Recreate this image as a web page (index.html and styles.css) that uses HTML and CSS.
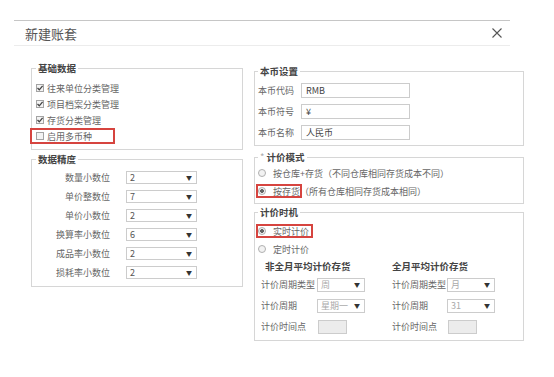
FILE: index.html
```html
<!DOCTYPE html>
<html>
<head>
<meta charset="utf-8">
<title>新建账套</title>
<link rel="stylesheet" href="styles.css">
</head>
<body>
<div class="dialog">
  <div class="dlg-head">
    <span class="dlg-title">新建账套</span>
    <svg class="dlg-close" width="10" height="10" viewBox="0 0 10 10"><path d="M0.5 0.5 L9.5 9.5 M9.5 0.5 L0.5 9.5" stroke="#555" stroke-width="1.1" fill="none"/></svg>
  </div>
  <div class="dlg-body">
    <div class="col-left">
      <fieldset class="grp grp-base">
        <legend>基础数据</legend>
        <div class="chk-row"><span class="chk on"><svg width="8" height="8" viewBox="0 0 8 8"><path d="M1.5 4 L3.3 5.8 L6.6 1.8" stroke="#444" stroke-width="1.3" fill="none"/></svg></span>往来单位分类管理</div>
        <div class="chk-row"><span class="chk on"><svg width="8" height="8" viewBox="0 0 8 8"><path d="M1.5 4 L3.3 5.8 L6.6 1.8" stroke="#444" stroke-width="1.3" fill="none"/></svg></span>项目档案分类管理</div>
        <div class="chk-row"><span class="chk on"><svg width="8" height="8" viewBox="0 0 8 8"><path d="M1.5 4 L3.3 5.8 L6.6 1.8" stroke="#444" stroke-width="1.3" fill="none"/></svg></span>存货分类管理</div>
        <div class="chk-row"><span class="hl hl-multi"><span class="chk"></span>启用多币种</span></div>
      </fieldset>
      <fieldset class="grp grp-prec">
        <legend>数据精度</legend>
        <div class="prec-row"><span class="prec-label">数量小数位</span><span class="sel"><span>2</span><span class="arr">▼</span></span></div>
        <div class="prec-row"><span class="prec-label">单价整数位</span><span class="sel"><span>7</span><span class="arr">▼</span></span></div>
        <div class="prec-row"><span class="prec-label">单价小数位</span><span class="sel"><span>2</span><span class="arr">▼</span></span></div>
        <div class="prec-row"><span class="prec-label">换算率小数位</span><span class="sel"><span>6</span><span class="arr">▼</span></span></div>
        <div class="prec-row"><span class="prec-label">成品率小数位</span><span class="sel"><span>2</span><span class="arr">▼</span></span></div>
        <div class="prec-row"><span class="prec-label">损耗率小数位</span><span class="sel"><span>2</span><span class="arr">▼</span></span></div>
      </fieldset>
    </div>
    <div class="col-right">
      <fieldset class="grp grp-cur">
        <legend>本币设置</legend>
        <div class="cur-row"><span class="cur-label">本币代码</span><span class="txt">RMB</span></div>
        <div class="cur-row"><span class="cur-label">本币符号</span><span class="txt">¥</span></div>
        <div class="cur-row"><span class="cur-label">本币名称</span><span class="txt">人民币</span></div>
      </fieldset>
      <fieldset class="grp grp-mode">
        <legend><span class="star">*</span> 计价模式</legend>
        <div class="rad-row"><span class="rad"></span>按仓库+存货（不同仓库相同存货成本不同）</div>
        <div class="rad-row"><span class="hl hl-stock"><span class="rad on"></span>按存货</span>（所有仓库相同存货成本相同）</div>
      </fieldset>
      <fieldset class="grp grp-time">
        <legend>计价时机</legend>
        <div class="rad-row"><span class="hl hl-real"><span class="rad on"></span>实时计价</span></div>
        <div class="rad-row"><span class="rad"></span>定时计价</div>
        <div class="timing">
          <div class="tcol tcol-a">
            <div class="thead">非全月平均计价存货</div>
            <div class="trow"><span class="tlabel">计价周期类型</span><span class="sel sel-sm"><span>周</span><span class="arr">▼</span></span></div>
            <div class="trow"><span class="tlabel">计价周期</span><span class="sel sel-sm"><span>星期一</span><span class="arr">▼</span></span></div>
            <div class="trow"><span class="tlabel">计价时间点</span><span class="tbox"></span></div>
          </div>
          <div class="tcol tcol-b">
            <div class="thead">全月平均计价存货</div>
            <div class="trow"><span class="tlabel">计价周期类型</span><span class="sel sel-sm"><span>月</span><span class="arr">▼</span></span></div>
            <div class="trow"><span class="tlabel">计价周期</span><span class="sel sel-sm"><span>31</span><span class="arr">▼</span></span></div>
            <div class="trow"><span class="tlabel">计价时间点</span><span class="tbox"></span></div>
          </div>
        </div>
      </fieldset>
    </div>
  </div>
</div>
</body>
</html>
```

FILE: styles.css
```css
body {
    margin: 0;
    background: #ffffff;
    font-family: "Noto Sans CJK SC", "Liberation Sans", sans-serif;
    font-size: 9px;
    color: #666666;
}
.dialog {
    margin: 20px 0 0 14px;
    width: 496px;
    border-top: 1px solid #c6c6c6;
}
.dlg-head {
    height: 24px;
    border-bottom: 1px solid #ececec;
    display: flex;
    align-items: center;
    justify-content: space-between;
    padding: 0 8px 0 11px;
}
.dlg-title {
    font-size: 13px;
    color: #555555;
}
.dlg-body {
    display: flex;
    gap: 11px;
    padding: 16px 0 0 17px;
}
.col-left {
    width: 212px;
    flex: none;
}
.col-right {
    width: 270px;
    flex: none;
    margin-top: 3px;
}

/* group boxes */
.grp {
    margin: 0;
    box-sizing: border-box;
    width: 100%;
    min-width: 0;
    border: 1px solid #d6d6d6;
    padding: 0 4px;
}
.grp legend {
    padding: 0 2px;
    font-size: 9.5px;
    line-height: 12px;
    font-weight: bold;
    color: #444444;
}
.grp-base {
    padding-top: 6px;
    padding-bottom: 5px;
}
.grp-prec {
    margin-top: 3px;
    padding-top: 3px;
    padding-bottom: 4px;
}
.grp-cur {
    padding: 3px 3px 2px;
}
.grp-mode {
    margin-top: 5px;
    padding: 1px 3px 3px;
}
.grp-time {
    margin-top: 2px;
    padding: 4px 3px 3px;
}
.star {
    color: #aaaaaa;
    font-weight: normal;
}

/* check boxes and radios */
.chk-row {
    height: 16px;
    display: flex;
    align-items: center;
}
.chk {
    width: 8px;
    height: 8px;
    box-sizing: border-box;
    border: 1px solid #a4a4a4;
    background: #f3f3f3;
    margin-right: 3px;
    display: flex;
    align-items: center;
    justify-content: center;
}
.chk svg {
    flex: none;
}
.rad-row {
    height: 18px;
    display: flex;
    align-items: center;
}
.rad {
    width: 8px;
    height: 8px;
    box-sizing: border-box;
    border: 1px solid #b0b0b0;
    border-radius: 50%;
    background: #f2f2f2;
    margin-right: 7px;
    flex: none;
}
.rad.on {
    background: radial-gradient(circle, #666666 0 1.6px, #f2f2f2 2.2px);
}
.hl {
    display: inline-flex;
    align-items: center;
    box-sizing: border-box;
    outline: 2px solid #d6443f;
}
.hl-multi {
    width: 81px;
    height: 12px;
    margin-left: -4px;
    padding-left: 4px;
}
.hl-stock {
    height: 10px;
}
.hl-real {
    height: 10px;
    padding-right: 2px;
}

/* precision */
.prec-row {
    height: 19px;
    display: flex;
    align-items: center;
}
.prec-label {
    width: 74px;
    margin-right: 16px;
    text-align: right;
}
.sel {
    width: 71px;
    height: 13px;
    box-sizing: border-box;
    border: 1px solid #cccccc;
    background: #ffffff;
    display: flex;
    align-items: center;
    justify-content: space-between;
    padding: 0 4px 0 3px;
    color: #555555;
}
.sel .arr {
    font-size: 6px;
    color: #333333;
}

/* currency */
.cur-row {
    height: 21px;
    display: flex;
    align-items: center;
}
.cur-label {
    width: 43px;
}
.txt {
    width: 109px;
    height: 15px;
    box-sizing: border-box;
    border: 1px solid #cccccc;
    padding-left: 4px;
    line-height: 13px;
    color: #444444;
}

/* timing */
.timing {
    display: grid;
    grid-template-columns: 131px 131px;
    padding-left: 3px;
}
.thead {
    height: 16px;
    line-height: 16px;
    font-weight: bold;
    font-size: 9.5px;
    color: #444444;
}
.tcol-a .thead {
    padding-left: 4px;
}
.trow {
    height: 21px;
    display: flex;
    align-items: center;
}
.tlabel {
    width: 56px;
}
.tcol-b .tlabel {
    width: 55px;
}
.sel-sm {
    width: 48px;
    height: 14px;
    color: #aaaaaa;
}
.tbox {
    width: 29px;
    height: 14px;
    box-sizing: border-box;
    border: 1px solid #cccccc;
    background: #ececec;
    margin-left: 1px;
}
```
